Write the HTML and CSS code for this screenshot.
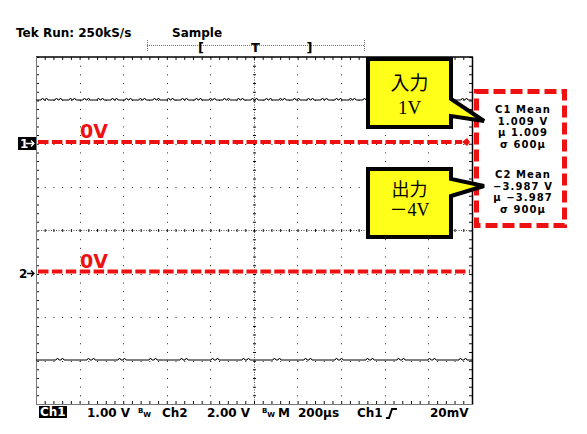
FILE: index.html
```html
<!DOCTYPE html>
<html lang="ja">
<head>
    <meta charset="UTF-8">
    <meta name="viewport" content="width=device-width, initial-scale=1.0">
    <title>Oscilloscope Capture</title>
    <link rel="stylesheet" href="styles.css">
</head>
<body>
    <div class="scope">
        <div class="status">
            <span>Tek Run: 250kS/s</span>
            <span>Sample</span>
        </div>

        <svg class="screen" width="587" height="366" viewBox="0 40 587 366">
            <defs>
                <pattern id="wave1" x="36" y="96" width="14" height="6" patternUnits="userSpaceOnUse">
                    <path d="M0,4 H5 L6.5,2 L8,4 H9 L10.5,2 L12,4 H14" fill="none" stroke="#000"/>
                </pattern>
                <pattern id="wave2" x="36" y="356" width="31" height="6" patternUnits="userSpaceOnUse">
                    <path d="M0,4 H20 L21.5,2 L23,4 H25 L26.5,2 L28,4 H31" fill="none" stroke="#000"/>
                </pattern>
            </defs>

            <!-- record bar -->
            <g class="record">
                <line x1="147" y1="45.5" x2="364" y2="45.5"/>
                <line x1="147.5" y1="40" x2="147.5" y2="51"/>
                <line x1="364.5" y1="40" x2="364.5" y2="51"/>
            </g>
            <text class="record-mark" x="201" y="52">[</text>
            <text class="record-mark" x="255.5" y="52">T</text>
            <text class="record-mark" x="309.5" y="52">]</text>

            <!-- graticule -->
            <g class="grid-v">
                <line x1="80.5" y1="57" x2="80.5" y2="404"/>
                <line x1="123.5" y1="57" x2="123.5" y2="404"/>
                <line x1="167.5" y1="57" x2="167.5" y2="404"/>
                <line x1="210.5" y1="57" x2="210.5" y2="404"/>
                <line x1="297.5" y1="57" x2="297.5" y2="404"/>
                <line x1="341.5" y1="57" x2="341.5" y2="404"/>
                <line x1="385.5" y1="57" x2="385.5" y2="404"/>
                <line x1="428.5" y1="57" x2="428.5" y2="404"/>
            </g>
            <g class="grid-h">
                <line x1="36" y1="100.5" x2="472" y2="100.5"/>
                <line x1="36" y1="144.5" x2="472" y2="144.5"/>
                <line x1="36" y1="187.5" x2="472" y2="187.5"/>
                <line x1="36" y1="274.5" x2="472" y2="274.5"/>
                <line x1="36" y1="317.5" x2="472" y2="317.5"/>
                <line x1="36" y1="361.5" x2="472" y2="361.5"/>
            </g>
            <g class="axis">
                <line x1="254.5" y1="57" x2="254.5" y2="404"/>
                <line x1="36" y1="230.5" x2="472" y2="230.5"/>
            </g>
            <g class="ticks-h">
                <line x1="36" y1="230.5" x2="472" y2="230.5"/>
                <line x1="36" y1="58.5" x2="472" y2="58.5"/>
                <line x1="36" y1="402.5" x2="472" y2="402.5"/>
            </g>
            <g class="ticks-v">
                <line x1="254.5" y1="57" x2="254.5" y2="404"/>
                <line x1="37.5" y1="57" x2="37.5" y2="404"/>
                <line x1="470.5" y1="57" x2="470.5" y2="404"/>
            </g>
            <line class="frame" x1="36" y1="57" x2="473" y2="57"/>
            <line class="frame" x1="472.5" y1="57" x2="472.5" y2="405"/>
            <line class="frame-soft" x1="36.5" y1="57" x2="36.5" y2="405"/>
            <line class="frame-soft" x1="36" y1="404.5" x2="473" y2="404.5"/>

            <!-- traces -->
            <rect x="36" y="96" width="436" height="6" fill="url(#wave1)"/>
            <rect x="36" y="356" width="436" height="6" fill="url(#wave2)"/>

            <!-- channel markers -->
            <rect x="18" y="137" width="18" height="13" fill="#000"/>
            <text class="ch-mark ch-mark-inv" x="20" y="148">1</text>
            <path class="ch-arrow ch-arrow-inv" d="M26,143.5 H34 M31,140.5 L34,143.5 L31,146.5"/>
            <text class="ch-mark" x="19" y="278">2</text>
            <path class="ch-arrow" d="M27,273.5 H34 M31,270.5 L34,273.5 L31,276.5"/>

            <!-- 0V reference lines -->
            <line class="ref-line" x1="38" y1="142" x2="462" y2="142"/>
            <polygon class="ref-end" points="462,142 467,138 470,142 467,146"/>
            <line class="ref-line" x1="38" y1="271.5" x2="470" y2="271.5"/>
            <text class="zero" x="80" y="138">0V</text>
            <text class="zero" x="80" y="268">0V</text>

            <!-- measurement frame and callouts -->
            <rect class="measure-frame" x="476.5" y="91.5" width="88" height="134"/>
            <path class="bubble" d="M368,59 H451 V99 L484,121 L451,116 V127 H368 Z"/>
            <path class="bubble" d="M368,169 H451 V179 L484,186 L451,196 V237 H368 Z"/>
        </svg>

        <div class="readout">
            <span class="inv">Ch1</span>
            <span>1.00 V</span>
            <span class="bw">B<span class="bw-sub">W</span></span>
            <span>Ch2</span>
            <span>2.00 V</span>
            <span class="bw">B<span class="bw-sub">W</span></span>
            <span>M</span>
            <span>200μs</span>
            <span>Ch1</span>
            <svg class="slope" width="12" height="11" viewBox="0 0 12 11">
                <path d="M0,10 H3 L6,1 H11" fill="none" stroke="#000" stroke-width="2"/>
            </svg>
            <span>20mV</span>
        </div>

        <div class="callout callout-in">
            <span>入力</span>
            <span>1V</span>
        </div>
        <div class="callout callout-out">
            <span>出力</span>
            <span>－4V</span>
        </div>

        <div class="measure">
            <div class="measure-block">
                <div>C1 Mean</div>
                <div>1.009 V</div>
                <div>μ 1.009</div>
                <div>σ 600μ</div>
            </div>
            <div class="measure-block">
                <div>C2 Mean</div>
                <div>−3.987 V</div>
                <div>μ −3.987</div>
                <div>σ 900μ</div>
            </div>
        </div>
    </div>
</body>
</html>
```

FILE: styles.css
```css
body {
    margin: 0;
    background-color: #fff;
}

.scope {
    position: relative;
    width: 587px;
    height: 434px;
    overflow: hidden;
    font-family: "DejaVu Sans", sans-serif;
    color: #000;
}

.status {
    display: grid;
    grid-template-columns: 156px auto;
    height: 40px;
    box-sizing: border-box;
    padding: 26px 0 0 16px;
    font-size: 12px;
    font-weight: bold;
    line-height: 14px;
}

.screen {
    display: block;
}

/* svg parts */
.record line {
    stroke: #777;
    stroke-dasharray: 1 1;
}

.record-mark {
    font-family: "DejaVu Sans", sans-serif;
    font-size: 13px;
    font-weight: bold;
    text-anchor: middle;
    fill: #000;
}

.grid-v line {
    stroke: #222;
    stroke-dasharray: 1 7.675;
}

.grid-h line {
    stroke: #222;
    stroke-dasharray: 1 7.72;
}

.axis line {
    stroke: #555;
    stroke-dasharray: 1 1.5;
}

.ticks-h line {
    stroke: #111;
    stroke-width: 3;
    stroke-dasharray: 1 7.72;
}

.ticks-v line {
    stroke: #111;
    stroke-width: 3;
    stroke-dasharray: 1 7.675;
}

.frame {
    stroke: #000;
    stroke-width: 1.5;
}

.frame-soft {
    stroke: #777;
}

.ch-mark {
    font-family: "DejaVu Sans", sans-serif;
    font-size: 12px;
    font-weight: bold;
    fill: #000;
}

.ch-mark-inv {
    fill: #fff;
}

.ch-arrow {
    fill: none;
    stroke: #000;
    stroke-width: 1.3;
}

.ch-arrow-inv {
    stroke: #fff;
}

.ref-line {
    stroke: #ee1111;
    stroke-width: 4;
    stroke-dasharray: 10.5 3.4;
}

.ref-end {
    fill: #ee1111;
}

.zero {
    font-family: "DejaVu Sans", sans-serif;
    font-size: 19px;
    font-weight: bold;
    fill: #ee1111;
}

.measure-frame {
    fill: #fff;
    stroke: #ee1111;
    stroke-width: 5;
    stroke-dasharray: 12 5;
}

.bubble {
    fill: #ffff1a;
    stroke: #000;
    stroke-width: 4;
}

/* bottom readout */
.readout {
    display: grid;
    grid-template-columns: 48px 51px 24px 45px 55px 16px 20px 59px 29px 44px auto;
    align-items: start;
    padding-left: 39px;
    font-size: 12px;
    font-weight: bold;
    line-height: 14px;
    white-space: nowrap;
}

.inv {
    justify-self: start;
    padding: 1px 1px 0;
    background-color: #000;
    color: #fff;
    line-height: 11px;
}

.bw {
    padding-top: 2px;
    font-size: 7px;
    line-height: 7px;
}

.bw-sub {
    vertical-align: -4px;
}

.slope {
    display: block;
    margin-top: 2px;
}

/* callouts */
.callout {
    position: absolute;
    left: 370px;
    width: 79px;
    display: flex;
    flex-direction: column;
    align-items: center;
    font-family: "Liberation Serif", "Noto Sans CJK JP", serif;
    font-size: 19px;
}

.callout-in {
    top: 72px;
    line-height: 23.5px;
}

.callout-out {
    top: 180px;
    font-size: 18px;
    line-height: 20px;
}

/* measurement readout */
.measure {
    position: absolute;
    left: 479px;
    top: 94px;
    width: 78px;
    padding: 10px 0 0 5px;
    text-align: center;
    font-size: 10px;
    font-weight: bold;
    letter-spacing: 1.1px;
    line-height: 11.7px;
}

.measure-block + .measure-block {
    margin-top: 18px;
}
```
